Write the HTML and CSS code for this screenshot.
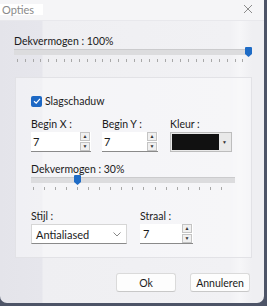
FILE: index.html
```html
<!DOCTYPE html>
<html lang="nl">
<head>
  <meta charset="UTF-8">
  <title>Opties</title>
  <link rel="stylesheet" href="styles.css">
</head>
<body>
  <div class="dialog">
    <div class="titlebar">
      <span class="title">Opties</span>
      <svg class="close" width="10" height="10" viewBox="0 0 10 10">
        <path d="M1 1 L9 9 M9 1 L1 9" stroke="#8c8c8c" stroke-width="1" fill="none"/>
      </svg>
    </div>

    <div class="content">
      <div class="label">Dekvermogen : 100%</div>
      <div class="slider slider-top">
        <div class="track"></div>
        <div class="thumb thumb-top"></div>
        <div class="ticks ticks-top"></div>
      </div>

      <div class="groupbox">
        <label class="check-row">
          <span class="checkbox">
            <svg width="8" height="8" viewBox="0 0 8 8"><path d="M1 4.2 L3.2 6.2 L7 1.8" stroke="#fff" stroke-width="1.2" fill="none"/></svg>
          </span>
          Slagschaduw
        </label>

        <div class="field-row">
          <div class="field field-x">
            <div class="label">Begin X :</div>
            <div class="spin"><span class="value">7</span><span class="spin-btns"><span>&#9650;</span><span>&#9660;</span></span></div>
          </div>
          <div class="field field-y">
            <div class="label">Begin Y :</div>
            <div class="spin"><span class="value">7</span><span class="spin-btns"><span>&#9650;</span><span>&#9660;</span></span></div>
          </div>
          <div class="field field-color">
            <div class="label">Kleur :</div>
            <div class="color-combo"><span class="swatch"></span><span class="drop">&#9660;</span></div>
          </div>
        </div>

        <div class="label label-opacity">Dekvermogen : 30%</div>
        <div class="slider slider-inner">
          <div class="track"></div>
          <div class="thumb thumb-inner"></div>
          <div class="ticks ticks-inner"></div>
        </div>

        <div class="field-row field-row-bottom">
          <div class="field field-style">
            <div class="label">Stijl :</div>
            <div class="combo"><span class="value">Antialiased</span>
              <svg width="8" height="5" viewBox="0 0 8 5"><path d="M0.5 0.5 L4 4 L7.5 0.5" stroke="#888" fill="none"/></svg>
            </div>
          </div>
          <div class="field field-radius">
            <div class="label">Straal :</div>
            <div class="spin"><span class="value">7</span><span class="spin-btns"><span>&#9650;</span><span>&#9660;</span></span></div>
          </div>
        </div>
      </div>
    </div>

    <div class="buttons">
      <button class="btn btn-ok">Ok</button>
      <button class="btn">Annuleren</button>
    </div>
  </div>
</body>
</html>
```

FILE: styles.css
```css
body {
  margin: 0;
  background: #4d5467;
  font-family: "Lato", "Noto Sans", sans-serif;
  font-size: 10.5px;
  color: #1b1b1b;
}

.dialog {
  width: 264px;
  height: 303px;
  background: linear-gradient(90deg, #e4e4ea 0, #e6e6ec 42px, #efeff2 43px, #f1f1f4 230px, #f6f6f8 240px, #efeff2 252px);
  border-radius: 0 0 7px 7px;
  display: flex;
  flex-direction: column;
}

.titlebar {
  height: 21px;
  display: flex;
  align-items: center;
  justify-content: space-between;
  background: #f5f5f7;
  border-bottom: 1px solid #e8e8ec;
  box-sizing: border-box;
}

.title {
  color: #8a8a8a;
  background: #fff;
  padding: 0 9px 0 2px;
  line-height: 11px;
  margin-top: -2px;
  font-size: 11px;
}

.close {
  margin-right: 11px;
  margin-top: -2px;
}

.content {
  padding: 13px 13px 0 14px;
}

.label {
  line-height: 14px;
  height: 14px;
}

.slider {
  position: relative;
  height: 18px;
}

.track {
  position: absolute;
  left: 0;
  right: 0;
  top: 1px;
  height: 6px;
  background: #dcdcde;
  border-top: 1px solid #cbcbcd;
  box-sizing: border-box;
}

.thumb {
  position: absolute;
  top: -1px;
  width: 7px;
  height: 10px;
  background: #1f6cc6;
  border-radius: 1px 1px 0 0;
  clip-path: polygon(0 0, 100% 0, 100% 70%, 50% 100%, 0 70%);
}

.thumb-top {
  left: 231px;
}

.ticks {
  position: absolute;
  top: 11px;
  height: 3px;
  background: repeating-linear-gradient(90deg, #a8a8a8 0 1px, transparent 1px 7.77px);
}

.ticks-top {
  left: 3px;
  right: 2px;
}

.groupbox {
  margin-top: 11px;
  margin-left: 1px;
  width: 237px;
  height: 181px;
  box-sizing: border-box;
  border: 1px solid #e2e2e6;
  background: rgba(250, 250, 252, 0.55);
  padding: 17px 16px 0 15px;
}

.check-row {
  display: flex;
  align-items: center;
  gap: 3px;
  height: 12px;
}

.checkbox {
  width: 11px;
  height: 11px;
  border-radius: 2px;
  background: #1d68c4;
  display: flex;
  align-items: center;
  justify-content: center;
}

.field-row {
  display: flex;
  margin-top: 10px;
}

.field-x {
  width: 71px;
}

.field-y {
  width: 68px;
}

.field .label {
  margin-bottom: 1px;
}

.spin {
  height: 20px;
  background: #fff;
  border-bottom: 1px solid #8a8a8a;
  box-sizing: border-box;
  display: flex;
  align-items: center;
  justify-content: space-between;
  padding: 0 1px 0 2px;
  font-size: 11px;
}

.field-x .spin {
  width: 60px;
}

.field-y .spin {
  width: 56px;
}

.spin-btns {
  display: flex;
  flex-direction: column;
  gap: 1px;
}

.spin-btns span {
  width: 8px;
  height: 7px;
  border: 1px solid #c4c4c4;
  background: #f0f0f0;
  font-size: 5px;
  line-height: 7px;
  text-align: center;
  color: #333;
}

.color-combo {
  width: 62px;
  height: 20px;
  box-sizing: border-box;
  border: 1px solid #bdbdbd;
  background: #e9e9e9;
  display: flex;
  align-items: center;
  padding: 1px;
}

.swatch {
  width: 47px;
  height: 16px;
  background: #111;
}

.drop {
  flex: 1;
  font-size: 5px;
  text-align: center;
  color: #333;
}

.label-opacity {
  margin-top: 10px;
}

.slider-inner {
  margin-top: 0;
  width: 204px;
}

.thumb-inner {
  left: 43px;
}

.ticks-inner {
  left: 2px;
  right: 3px;
  background: repeating-linear-gradient(90deg, #a8a8a8 0 1px, transparent 1px 11.05px);
}

.field-row-bottom {
  margin-top: 15px;
}

.field-style {
  width: 109px;
}

.combo {
  width: 96px;
  height: 20px;
  box-sizing: border-box;
  background: #fff;
  border: 1px solid #d6d6d6;
  border-bottom-color: #8a8a8a;
  display: flex;
  align-items: center;
  justify-content: space-between;
  padding: 0 5px 0 4px;
  font-size: 11px;
}

.field-radius .spin {
  width: 53px;
  padding-left: 3px;
}

.buttons {
  display: flex;
  justify-content: flex-end;
  gap: 14px;
  padding: 15px 14px 0 0;
}

.btn {
  width: 60px;
  height: 19px;
  padding: 0;
  font-family: inherit;
  font-size: 10.5px;
  color: #1b1b1b;
  background: #fdfdfd;
  border: 1px solid #dadada;
  border-bottom-color: #c8c8c8;
  border-radius: 3px;
}
```
